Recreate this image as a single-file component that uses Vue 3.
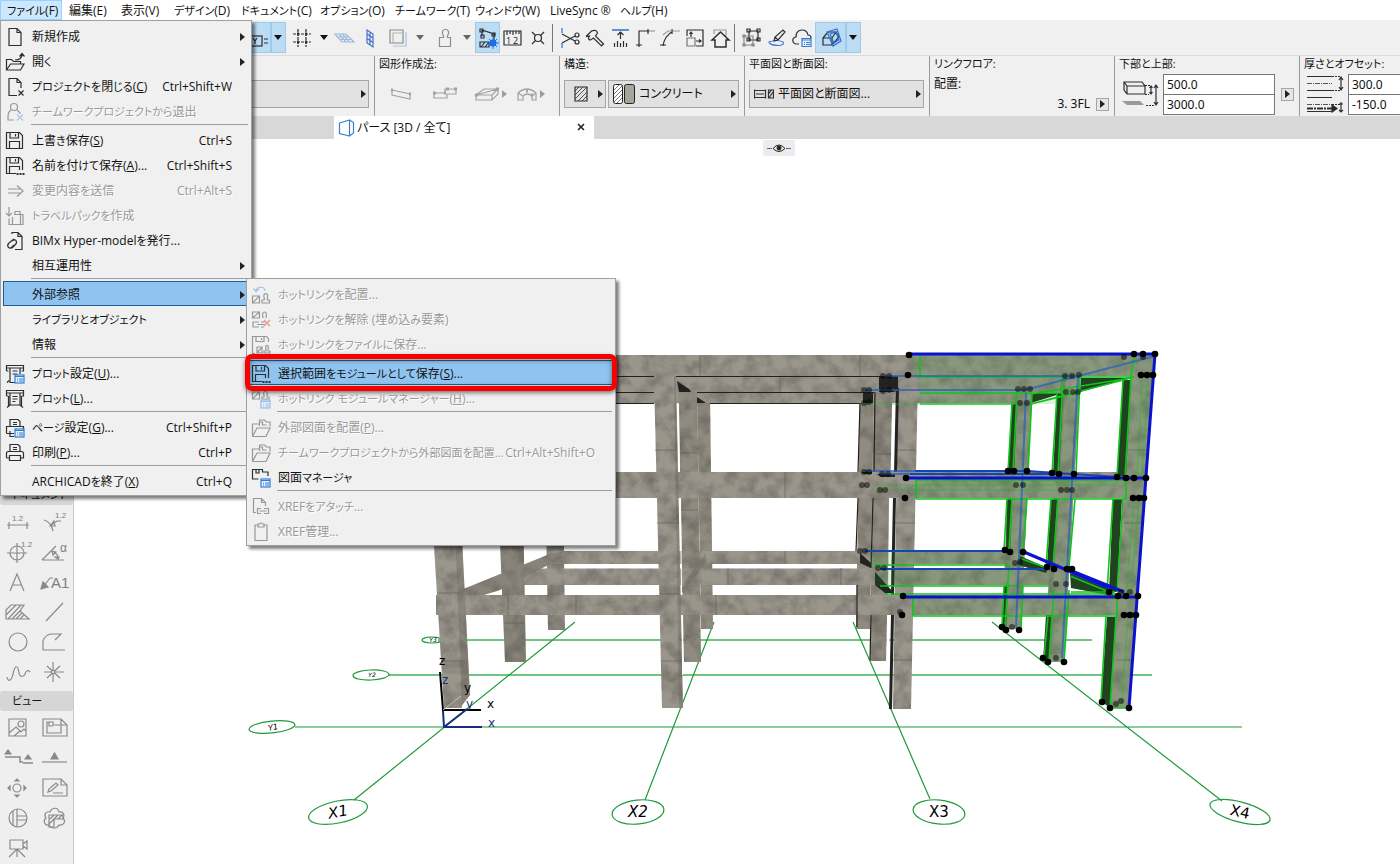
<script setup>
import { ref } from 'vue'

const menuBar = ['ファイル(F)', '編集(E)', '表示(V)', 'デザイン(D)', 'ドキュメント(C)', 'オプション(O)', 'チームワーク(T)', 'ウィンドウ(W)', 'LiveSync ®', 'ヘルプ(H)']

// Kana runs land on the odd indexes, everything else on the even ones.
const runs = (text) => text.split(/([ぁ-んァ-ヶー]+)/)

const fileMenu = [
  [
    { icon: 'doc', text: '新規作成', sub: true },
    { icon: 'open', text: '開く', sub: true },
    { icon: 'docClose', text: 'プロジェクトを閉じる', key: 'C', short: 'Ctrl+Shift+W' },
    { icon: 'leave', text: 'チームワークプロジェクトから退出', off: true },
  ],
  [
    { icon: 'save', text: '上書き保存', key: 'S', short: 'Ctrl+S' },
    { icon: 'saveAs', text: '名前を付けて保存', key: 'A', dots: true, short: 'Ctrl+Shift+S' },
    { icon: 'send', text: '変更内容を送信', short: 'Ctrl+Alt+S', off: true },
    { icon: 'travel', text: 'トラベルパックを作成', off: true },
    { icon: 'bimx', text: 'BIMx Hyper-modelを発行', dots: true },
    { text: '相互運用性', sub: true },
  ],
  [
    { text: '外部参照', sub: true, active: true },
    { text: 'ライブラリとオブジェクト', sub: true },
    { text: '情報', sub: true },
  ],
  [
    { icon: 'plotSet', text: 'プロット設定', key: 'U', dots: true },
    { icon: 'plot', text: 'プロット', key: 'L', dots: true },
  ],
  [
    { icon: 'pageSet', text: 'ページ設定', key: 'G', dots: true, short: 'Ctrl+Shift+P' },
    { icon: 'print', text: '印刷', key: 'P', dots: true, short: 'Ctrl+P' },
  ],
  [{ text: 'ARCHICADを終了', key: 'X', short: 'Ctrl+Q' }],
]

const subMenu = [
  [
    { icon: 'hotPlace', text: 'ホットリンクを配置', dots: true, off: true },
    { icon: 'hotBreak', text: 'ホットリンクを解除 (埋め込み要素)', off: true },
    { icon: 'hotSave', text: 'ホットリンクをファイルに保存', dots: true, off: true },
  ],
  [
    { icon: 'saveAs', text: '選択範囲をモジュールとして保存', key: 'S', dots: true, active: true },
    { icon: 'hotManage', text: 'ホットリンク モジュールマネージャー', key: 'H', dots: true, off: true },
  ],
  [
    { icon: 'extDraw', text: '外部図面を配置', key: 'P', dots: true, off: true },
    { icon: 'extDraw', text: 'チームワークプロジェクトから外部図面を配置', dots: true, short: 'Ctrl+Alt+Shift+O', off: true, tight: true },
    { icon: 'drawManage', text: '図面マネージャ' },
  ],
  [
    { icon: 'xref', text: 'XREFをアタッチ', dots: true, off: true },
    { icon: 'clip', text: 'XREF管理', dots: true, off: true },
  ],
]

const listBadge = '<g stroke="#2f7fd6"><rect x="10" y="11" width="9" height="8" fill="#eaf3fd"/><path d="M10 12.5h9M12 15h1M14 15h4M12 17h1M14 17h4"/></g>'

const icons = {
  doc: '<path d="M4 1.5h8l4 4v13H4zM12 1.5v4h4"/>',
  open: '<path d="M1.5 18V7.5h5l2 2h7V12M1.500 18l4-6h13.5l-3.5 6zM10 8c5 0 7-2 7-6M14.5 4.500l2.5-3 2.5 3"/>',
  docClose: '<path d="M12 18.5H4v-17h8l4 4V11M12 1.5v4h4M13.5 13.5l5 5M18.5 13.5l-5 5"/>',
  leave: '<circle cx="9" cy="5" r="3.5"/><path d="M6 8c-3 2-3 4-3 10h6M12 8q3 2 3 4"/><path d="M12 12.5l6 6M18 12.5l-6 6" stroke="#5f94e8"/>',
  save: '<path d="M1.5 1.5h13l3 3v13h-16zM5 1.5V7h8.500V1.5M10.5 3v2.5M4.5 17.5v-7h10v7"/>',
  saveAs: '<path d="M11 17.5H1.5v-16h13l3 3V14M5 1.5V7h8.500V1.5M10.5 3v2.5M4.5 17.5v-7h10V14"/><path d="M11.5 18h2M14.5 18h2M17.5 18h2" stroke-width="2"/>',
  send: '<path d="M3 8h12M3 12h12M12 4.500l6 5.500-6 5.500"/>',
  travel: '<path d="M4 1v9M1 7l3 3 3-3M4 12.500v6h14v-10H9M10 8.500v-3h5v3M7.500 11v7M15.500 9v9"/>',
  bimx: '<path d="M7 3V1.500h6l4 4v13h-7M13 1.500v4h4"/><path d="M9 8l-5 4c-3 3 0 7 3 4l2-2M7 10c4-3 6 1 3 4l-2 2c-2 2-5 1-5-1"/>',
  plotSet: '<path d="M1.500 7V1.500h17V7h-2M3.500 7h-2M5 4v14.500h5M15 4v6M1.500 4h17M2 18.500l2-2M7.500 7h5M7.500 10h5"/>' + listBadge,
  plot: '<path d="M1.500 7V1.500h17V7h-2M3.500 7h-2M5 4v12h10V4M1.500 4h17M2 18.500l3-2.500M18 18.500l-3-2.500M3.500 7v11M16.500 7v11M7.500 7.500h5M7.500 10h5M7.500 12.500h3"/>',
  pageSet: '<path d="M5 8V1.500h8l2 2V8M1.500 15.500V8.500h17v3M1.500 15.500H9M5 13v5.500h4M8 4.500h4M8 6.500h4"/>' + listBadge,
  print: '<path d="M5 8.500v-7h8l2 2v5M1.500 15v-4.500q0-2 2-2h13q2 0 2 2V15h-3M1.500 15h3M4.500 12.500h11v5h-11zM8 4.500h4M8 6.500h4"/>',
  hotPlace: '<path d="M1.500 11h7v7h-7zM1.500 18l7-7M11 18h7.500v-3h-2c-1-2 1-3 0-5.500q-1.700-2-3.400 0c-1 2.500 1 3.500 0 5.500H11z"/><path d="M14 6c0-5-8-5-9 0M2.500 3.500l2.500 3 3-2.500" stroke="#3d82dd"/>',
  hotBreak: '<path d="M1.500 2h7v6h-7zM1.500 8l7-6M12 8c0-2-1-3 0-5q1.500-2 3 0c1 2 0 3 0 5M8 12H2v5h6M6 14.500h8M10 12h4M10 17h3"/><path d="M13 10l6 6M19 10l-6 6" stroke="#e23b28" stroke-width="1.500"/>',
  hotSave: '<path d="M4 18.500H1.500v-17h14l2 2V7M5 1.500v5h8v-5M10.500 3v2M6 12h5v6H6zM6 18l5-6M13 18h6v-2h-2c-.3-2 1-3 0-5q-1-1-2 0c-1 2 .3 3 0 5h-2z"/>',
  hotManage: '<path d="M1.500 3h7v7h-7zM1.500 10l7-7M11 10h7V8h-2c-.5-2 1-3 0-5q-1.500-2-3 0c-1 2 .5 3 0 5h-2z"/>' + listBadge,
  extDraw: '<path d="M8 6H1.500v12.500L6 10h13l-4 8.500H1.500M8.500 8V2h5l2 2H19v4.500M8.500 4h3v3h4"/>',
  drawManage: '<path d="M7 11H1.500V1.500h10V4H17v4M5 1.500V5h3V1.500M1.500 11h6"/>' + listBadge,
  xref: '<path d="M5 15.500H2.500v-14h8l4 4V9M10.500 1.500v4h4M10 11.500H6.500v5H10M8.500 14h7M13 11.500h4.500v5H13"/>',
  clip: '<path d="M7 3H4v15.500h12V3h-3M7 2h1.500q1.500-2 3 0H13v3H7z"/>',
}

const caret = 'M0 0h8l-4 5z'
const tools = [
  { id: 'xy', label: '座標', cls: 'on first', art: '<path d="M9 3v3l3 1" /><rect x="4" y="10" width="20" height="10"/><path d="M26 13h4M26 17h4M8 12l4 5M12 12l-4 5M15 12l2 3 2-3M17 15v3"/>' },
  { id: 'xyMenu', label: '座標メニュー', cls: 'on drop', drop: true },
  { id: 'grid', label: 'グリッド', cls: 'gap3', art: '<path d="M8 3v18M16 3v18M3 8h18M3 16h18" stroke-dasharray="3 1"/><path d="M7 8h2M15 8h2M7 16h2M15 16h2" stroke-width="3"/>' },
  { id: 'gridMenu', label: 'グリッドメニュー', cls: 'drop gap3', drop: true },
  { id: 'plane', label: '編集平面', art: '<g stroke="#9db9dd"><path d="M2 8h11l8 8H9zM5 11h11M7 13.500h11M6 8l7 8M9.500 8l7 8"/></g>' },
  { id: 'planeV', label: '垂直平面', art: '<g stroke="#3f74cf"><path d="M9 4l6 4v13l-6-4zM12 6v13M9 8l6 4M9 12.500l6 4"/></g>' },
  { id: 'trace', label: 'トレース', cls: 'gap3', off: true, art: '<path d="M4 4h13v13H4z"/><path d="M7 7h10v10H7z" stroke="#b3b3b3"/><path d="M20 6v14H7" stroke="#9fc3ea"/>' },
  { id: 'traceMenu', label: 'トレースメニュー', cls: 'drop gap3', drop: true, off: true },
  { id: 'stamp', label: '重力', cls: 'gap4', off: true, art: '<path d="M6.500 20.500v-9h4c1-2-2-3-1-6 1-3 5-3 6 0 1 3-2 4-1 6h3v9z"/>' },
  { id: 'stampMenu', label: '重力メニュー', cls: 'drop gap3', drop: true, off: true },
  { id: 'snap', label: 'ガイドとスナップ', cls: 'on', art: '<path d="M6 10V4M6 4l12 4v6M4 3h3v3H4zM16 7h3v3h-3zM5 9h3v3H5zM4 16h9v5H4zM5 21l4-5M9 21l4-5"/><circle cx="17" cy="17" r="3.500" fill="#1769e0" stroke="none"/><path d="M17 11v12M11 17h12M13 13l8 8M21 13l-8 8" stroke="#1c74ec" stroke-width="1"/>' },
  { id: 'ruler', label: '測定', art: '<path d="M3 5h17v14H3zM6 5v4M9 5v3M12 5v4M15 5v3M18 5v3"/><text x="5" y="18" font-size="9" stroke="none" fill="#222">1</text><text x="12" y="18" font-size="9" stroke="none" fill="#222">2</text>' },
  { id: 'cross', label: '交差', art: '<circle cx="12" cy="12" r="3.500"/><path d="M6 6l3.500 3.500M18 6l-3.500 3.500M6 18l3.500-3.500M18 18l-3.500-3.500"/>' },
  { id: 'sep1', sep: true },
  { id: 'trim', label: 'トリム', art: '<path d="M4 2v5M4 17v5" stroke="#2f6fc5"/><path d="M4 8l13 7M4 17l13-7"/><circle cx="19" cy="9" r="2"/><circle cx="19" cy="16" r="2"/>' },
  { id: 'hammer', label: '調整', art: '<path d="M3.500 10l5-5q5-2 6 2l-2 3 8 8-2 2-8-8-3 2q-2 0-2-2l1-2-3 .5z"/>' },
  { id: 'raise', label: '高さ', art: '<path d="M4 4h17" stroke="#2f6fc5" stroke-width="1.500"/><path d="M12.500 13V6M9.500 9l3-3 3 3M6.500 17v4M9.500 15v6M12.500 17v4M15.500 15v6M18.500 17v4"/>' },
  { id: 'corner', label: 'コーナー', art: '<path d="M6 21V5h10M3 19h6M15 3v5"/><path d="M16 5h6" stroke="#999"/>' },
  { id: 'fillet', label: 'フィレット', art: '<path d="M5 20C6 12 10 8 15 5M2 19h6M14 3v5"/><path d="M5 9l5-4h12" stroke="#999"/>' },
  { id: 'resize', label: 'サイズ変更', art: '<path d="M4 10V4h16v16h-7M8 11V6M6.500 8L8 6l1.500 2M13 15h5M16 13.500l2 1.500-2 1.500"/><path d="M4 12h8v8H4z" stroke="#777"/>' },
  { id: 'home', label: 'ホーム', art: '<path d="M6 8V4h12v6" stroke="#999"/><path d="M4 14l8.500-8 8.500 8h-3v7H7v-7z" stroke-width="1.500"/>' },
  { id: 'sep2', sep: true },
  { id: 'group', label: 'グループ', art: '<path d="M9 5h9v9H9zM7 3h3v3H7zM17 3h3v3h-3zM17 12h3v3h-3zM7 12h3v3H7z"/><path d="M4 10h9v9H4zM3 9h2v2H3zM3 18h2v2H3zM12 18h2v2h-2z" stroke="#888"/>' },
  { id: 'pen', label: '変更', art: '<path d="M4 16q8-3 14 0 2 3-4 3.500-9 0-10-3.500z" stroke="#3d77d8"/><path d="M9 15l1-4 8-7 2 2-7 8zM10 11l3 3"/>' },
  { id: 'cloud', label: 'BIMcloud', art: '<path d="M9 18H6q-4-1-3-5 1-2 3-2 0-7 6-7 5 0 6 5 3 0 3 3"/><g stroke="#2f7fd6"><path d="M12 12.500h9v8h-9zM12 14h9M14 16.500h1M16 16.500h4M14 18.500h1M16 18.500h4"/></g>' },
  { id: 'view3d', label: '3D表示', cls: 'on wide gap1', art: '<path d="M4 12l5-6M4 12h9v7H4zM13 12l4-6 3 5-7 8M9 6h8"/><path d="M8 6l10-3 4 12-8 5zM11 8l6-2 3 8-5 3z" stroke="#3071cf"/>' },
  { id: 'view3dMenu', label: '3D表示メニュー', cls: 'on drop', drop: true },
]

const toolbox = [
  {
    title: 'ドキュメント',
    items: [
      ['寸法', '<path d="M3 16h22M5 13v7M23 13v7"/><text x="8" y="12" font-size="8">1.2</text>'],
      ['半径寸法', '<path d="M4 11q7 2 9 11M21 12h-4l-7 5M10 17l4-5 1 5z"/><text x="15" y="9" font-size="8">1.2</text>'],
      ['高度寸法', '<circle cx="13" cy="14" r="7"/><path d="M3 14h20M13 4v20"/><text x="17" y="8" font-size="8">1.2</text>'],
      ['角度寸法', '<path d="M2 21h22M2 21L16 7"/><path d="M12 12q7 3 6 9M12 12l1 4 3-3zM18 20l-3-2h4z"/><text x="20" y="13" font-size="12">α</text>'],
      ['テキスト', '<path d="M6 22l7-17 7 17M8 16h10"/>'],
      ['ラベル', '<path d="M13 9h-3l-7 9"/><path d="M1 20l2-7 5 5z" fill="#888"/><text x="11" y="19" font-size="15">A1</text>'],
      ['塗りつぶし', '<path d="M2 20v-9l5-5h13l-4 6 9 8zM4 20L17 6M8 20L17 11M12 20l6-6M16 20l4-4M2 16L12 6"/>'],
      ['線', '<path d="M6 22L23 4"/>'],
      ['円', '<circle cx="14" cy="13" r="9"/>'],
      ['ポリライン', '<path d="M3 21v-9q2-6 8-7h10l-6 6M3 21h22"/>'],
      ['スプライン', '<path d="M3 18c1 6 5 3 6-3 2-10 5-9 6-1 1 5 5 4 6 1 1-4 3-4 5-2"/>'],
      ['ホットスポット', '<path d="M13 3v20M4 13h20M7 7l13 12M20 7L7 19"/><rect x="11.500" y="11.500" width="3" height="3" fill="#efefef"/>'],
    ],
  },
  {
    title: 'ビュー',
    items: [
      ['図', '<path d="M5 4h17v17H5zM5 18l7-6 5 5 3-3 2 2M10 21l6-5"/><circle cx="17" cy="9" r="3"/>'],
      ['図面', '<path d="M3 4h18l6 6v11H3zM21 4v6h6M7 7h6v3h8v8H7zM9 7v4h4"/>'],
      ['断面図', '<path d="M1 12h15v5h3M19 18h10" stroke-width="1.500"/><path d="M1 9l3-4 3 4zM21 14l3-4 3 4z" fill="#888"/>'],
      ['立面図', '<path d="M2 17h25"/><path d="M11 14l3.500-6 3.500 6z" fill="#888"/>'],
      ['展開図', '<circle cx="13" cy="13" r="4"/><path d="M11 6l2-2 2 2zM11 20l2 2 2-2zM6 11l-2 2 2 2zM20 11l2 2-2 2z" fill="#888"/>'],
      ['ワークシート', '<path d="M3 4h18l6 6v11H3zM21 4v6h6M8 17l1-3 7-6 2 2-7 6zM13 18h10"/>'],
      ['詳細図', '<circle cx="14" cy="13" r="9"/><path d="M9 6v15M13 4v18M13 11h10M13 15h10"/>'],
      ['変更', '<path d="M9 20c-5 1-6-5-3-7-3-4 1-7 4-6 2-5 8-5 9 0 5-1 6 4 4 6 3 3 1 8-4 7-2 4-8 4-10 0z"/><path d="M9 10h14v4h-9v8H9zM10 14l4-4M14 14l4-4M18 14l4-4M9 19l5-5"/>'],
      ['カメラ', '<path d="M6 5h13v9H6zM19 9l4-3v8l-4-3M13 14v8M13 14l-8 8M13 14l8 8"/>'],
    ],
  },
]

const solidDots = [
  [909, 355], [1134, 354], [1143, 354], [1155, 354], [908, 375], [1141, 375], [1147, 375], [1153, 375],
  [1008, 471], [1014, 471], [1027, 471], [1052, 473], [1059, 474], [1074, 474], [906, 478], [905, 498],
  [1117, 477], [1126, 478], [1134, 478], [1146, 478], [1133, 498], [1139, 498], [1144, 498],
  [1005, 550], [1010, 552], [1023, 552], [1047, 567], [1054, 569], [1067, 569], [1072, 569],
  [1109, 592], [903, 596], [902, 615], [1118, 596], [1126, 596], [1138, 596], [1124, 615], [1130, 615], [1136, 615],
  [1002, 627], [1006, 630], [1019, 630], [1043, 658], [1048, 662], [1064, 662], [1102, 702], [1110, 708], [1129, 708],
]
const ghostDots = [
  [883, 376], [889, 376], [883, 391], [889, 390], [864, 390], [869, 390], [864, 403], [869, 402],
  [864, 472], [869, 472], [862, 485], [867, 485], [882, 474], [888, 474], [880, 490], [885, 490],
  [860, 551], [865, 551], [878, 568], [884, 568], [900, 612],
  [1018, 389], [1024, 389], [1030, 389], [1020, 403], [1027, 403], [1065, 376], [1072, 376], [1079, 375], [1066, 392], [1073, 392], [1078, 392],
  [1016, 485], [1023, 485], [1061, 490], [1067, 490], [1072, 490], [1124, 357], [1143, 357],
  [1015, 563], [1020, 562], [1056, 584], [1066, 584], [1121, 592], [1130, 592], [1012, 627], [1056, 658], [1116, 704], [1121, 701],
]

const lower = ref('500.0')
const upper = ref('3000.0')
const thick = ref('300.0')
const offset = ref('-150.0')
</script>

<template>
  <div class="app">
    <nav class="menubar">
      <button v-for="(m, i) in menuBar" :key="m" type="button" :class="{ open: i === 0 }"><span v-for="(r, ri) in runs(m)" :key="ri" :class="{ kana: ri % 2 }">{{ r }}</span></button>
    </nav>

    <div class="toolbar">
      <template v-for="t in tools" :key="t.id">
        <span v-if="t.sep" class="sep"></span>
        <button v-else type="button" class="tool" :class="[t.cls, { dim: t.off }]" :aria-label="t.label">
          <svg v-if="t.drop" width="9" height="6" viewBox="0 0 9 6"><path :d="caret" fill="currentColor" /></svg>
          <svg v-else class="line" :width="t.id === 'xy' ? 32 : 24" height="24" :viewBox="t.id === 'xy' ? '0 0 32 24' : '0 0 24 24'" v-html="t.art"></svg>
        </button>
      </template>
    </div>

    <div class="infobar">
      <section class="cell lead">
        <button type="button" class="combo" aria-label="レイヤー"><span class="tri"></span></button>
      </section>
      <section class="cell">
        <h2>図形作成法:</h2>
        <div class="methods">
          <button type="button" aria-label="単一"><svg class="line" width="24" height="18" viewBox="0 0 24 18"><path d="M3 5l18 4v5L3 10z" /><path d="M2 5h2M20 9h2" stroke-width="3" /></svg></button>
          <button type="button" aria-label="連続"><svg class="line" width="26" height="18" viewBox="0 0 26 18"><path d="M2 8h11V4h11v5h-9v4H2z" /><path d="M1 8h3M12 8h2M14 4h3M22 4h3" stroke-width="3" /></svg></button>
          <button type="button" aria-label="矩形"><svg class="line" width="26" height="18" viewBox="0 0 26 18"><path d="M2 10l8-6h14l-6 6zM2 10v5h16l6-6V4M18 10v5M2 10l22-6" /><path d="M1 10h3M22 4h3" stroke-width="3" /></svg></button>
          <span class="tri"></span>
          <button type="button" aria-label="円弧"><svg class="line" width="22" height="18" viewBox="0 0 22 18"><path d="M2 15V8q9-8 18 0v7h-4v-4q-5-4-9 0v4zM2 8l5 3M20 8l-4 3" /><path d="M10 6h2M15 10h2" stroke-width="3" /></svg></button>
          <span class="tri"></span>
        </div>
      </section>
      <section class="cell">
        <h2>構造:</h2>
        <div class="row">
          <button type="button" class="combo short" aria-label="構造の種類">
            <svg class="line" width="14" height="16" viewBox="0 0 14 16"><path d="M1 1h12v14H1z" /><path d="M1 5l4-4M1 9l8-8M1 13l12-12M4 15l9-9M8 15l5-5" stroke-width=".8" /></svg>
            <span class="tri"></span>
          </button>
          <button type="button" class="combo fill">
            <svg width="22" height="20" viewBox="0 0 22 20" stroke="#222"><rect x=".5" y=".5" width="9" height="19" rx="2" fill="#fff" /><path d="M1 6l5-5M1 10l8-8M1 14l8-8M1 18l8-8M4 19l5-5" stroke="#777" /><rect x="11.500" y=".5" width="10" height="19" rx="2" fill="#a5a699" /></svg>
            <span class="kana">コンクリート</span><span class="tri"></span>
          </button>
        </div>
      </section>
      <section class="cell">
        <h2>平面図と断面図:</h2>
        <div class="row">
          <button type="button" class="combo fill">
            <svg class="line" width="20" height="10" viewBox="0 0 20 10"><path d="M.5.5v9M.5 1.500h11v7H.5M11.500.5v9M2 5h8" /><path d="M14.500 1h5v8h-5zM14.500 5l3-4M15 9l4-6" /></svg>
            <span>平面図と断面図...</span><span class="tri"></span>
          </button>
        </div>
      </section>
      <section class="cell link">
        <h2>リンクフロア:</h2>
        <p>配置:</p>
        <div class="floor">3. 3FL <button type="button" class="mini" aria-label="フロアを選択"><span class="tri"></span></button></div>
      </section>
      <section class="cell">
        <h2>下部と上部:</h2>
        <div class="pair">
          <svg class="line" width="38" height="28" viewBox="0 0 38 28"><path d="M3 2h18l3 4v8H6l-3-4zM3 2l3 4h18M6 6v8" /><path d="M1 21h18l4 4H6z" fill="#9a9a9a" stroke="none" /><path d="M30 6v8M28.500 8l1.500-2 1.500 2M28.500 12l1.500 2 1.500-2M35 5v20M33 8l2-3 2 3M33 22l2 3 2-3" /><path d="M24 5.500h6M24 14.500h4M25 25.500h9" stroke-dasharray="2 1" /></svg>
          <div class="fields">
            <input v-model="lower" aria-label="下部" />
            <input v-model="upper" aria-label="上部" />
          </div>
          <button type="button" class="mini" aria-label="詳細"><span class="tri"></span></button>
        </div>
      </section>
      <section class="cell last">
        <h2>厚さとオフセット:</h2>
        <div class="pair">
          <svg class="line" width="38" height="38" viewBox="0 0 38 38"><path d="M1 1.500h25M1 15.500h25M1 22.500h25M1 36.500h26" /><path d="M1 8.500h25M1 29.500h25" stroke-dasharray="5 1 1 1" stroke-width=".8" /><path d="M26 1.500h8M26 15.500h8M26 29.500h8" stroke-dasharray="2 1" /><path d="M35 2v13M33 5l2-3 2 3M33 12l2 3 2-3M35 27v10M33 29h4M33 35l2 2 2-2" /><path d="M1 33.500h26" stroke-width="2" stroke-dasharray="6 1 2 1" /><path d="M26 30l5 3.500-5 3.500z" fill="#222" /></svg>
          <div class="fields">
            <input v-model="thick" aria-label="厚さ" />
            <input v-model="offset" aria-label="オフセット" />
          </div>
        </div>
      </section>
    </div>

    <div class="tabs">
      <div class="tab">
        <svg width="17" height="18" viewBox="0 0 17 18" fill="none" stroke="#3c7bdc" stroke-width="1.200"><path d="M1.500 4l10-3v16l-10-2.500zM11.500 1l4 2.500V14l-4 3" /></svg>
        <span>パース [3D / 全て]</span>
        <button type="button" aria-label="タブを閉じる"><svg width="9" height="9" viewBox="0 0 9 9"><path d="M1 1l6 6M7 1L1 7" stroke="#222" stroke-width="1.600" /></svg></button>
      </div>
    </div>

    <div class="work">
      <aside class="toolbox">
        <template v-for="g in toolbox" :key="g.title">
          <h3>{{ g.title }}</h3>
          <div class="grid">
            <button v-for="it in g.items" :key="it[0]" type="button" :aria-label="it[0]">
              <svg width="30" height="26" viewBox="0 0 30 26" v-html="it[1]"></svg>
            </button>
          </div>
        </template>
      </aside>

      <main class="viewport">
        <svg class="scene" viewBox="74 139 1326 725" preserveAspectRatio="xMinYMin meet">
          <defs>
            <filter id="concrete" x="0" y="0" width="100%" height="100%" color-interpolation-filters="sRGB">
              <feTurbulence type="fractalNoise" baseFrequency="0.07" numOctaves="4" seed="7" />
              <feColorMatrix values="0 0 0 0 .25  0 0 0 0 .24  0 0 0 0 .22  .8 0 0 0 -.3" />
              <feComposite in2="SourceAlpha" operator="in" result="stain" />
              <feMerge><feMergeNode in="SourceGraphic" /><feMergeNode in="stain" /></feMerge>
            </filter>
          </defs>

          <g class="axis">
            <path class="far" d="M438 640H1092M389 675H1152" />
            <path d="M295 727H1242M575 622L354 800M714 622L645 800M853 622L930 799M992 622L1222 801" />
            <ellipse cx="338" cy="812" rx="30" ry="11" transform="rotate(-12 338 812)" />
            <ellipse cx="638" cy="812" rx="26" ry="12" transform="rotate(-6 638 812)" />
            <ellipse cx="939" cy="812" rx="26" ry="12" transform="rotate(6 939 812)" />
            <ellipse cx="1240" cy="812" rx="31" ry="10" transform="rotate(15 1240 812)" />
            <ellipse cx="272" cy="727" rx="23" ry="6" transform="rotate(-6 272 727)" />
            <ellipse cx="371" cy="675" rx="18" ry="5" transform="rotate(-2 371 675)" />
            <ellipse cx="432" cy="640" rx="10" ry="3" />
          </g>
          <g class="tags">
            <text class="slant" x="338" y="817" transform="rotate(-10 338 812)">X1</text>
            <text class="slant" x="638" y="817">X2</text>
            <text x="939" y="817">X3</text>
            <text x="1240" y="817" transform="rotate(12 1240 812)">X4</text>
            <text class="slant small" x="273" y="730" transform="rotate(-12 273 727)">Y1</text>
            <text class="slant tiny" x="372" y="677">Y2</text>
            <text class="slant tiny" x="433" y="642">Y3</text>
          </g>

          <g filter="url(#concrete)" fill="#9a968c">
            <path fill="#8f8b80" d="M860 392h14l-4 237h-14zM697 392h13l3 237h-12zM544 400h18l3 230h-17z" />
            <path d="M400 392H1016V403H400zM548 551H1012V564H548z" />
            <path fill="#8f8b80" d="M874 376h19l-7 285h-16zM678 376h19l4 286h-17zM1012 392h20l-11 237h-19z" />
            <path d="M400 376H1066V392.500H400zM512 568.500H1052V585H512z" />
            <path fill="#89847a" d="M494 400h27l5 262h-21zM461 590l91-37 10-1v6l-62 32-16 5h-22zM682 586l24-33v10l-24 30zM1061 376h19l-16 286h-20z" />
            <path d="M400 355H1155L1153 376H400zM400 472H1146L1144 498H400zM436 595H1138L1136 615H436z" />
            <path fill="#89847a" d="M670 376h6l7 332h-6zM450 400h5l15 295-10 13z" />
            <path d="M654 376h20l5 332H662zM425 400h25l12 308H444zM898 376h20L911 709H893zM1131 370L1154 355 1129 708H1110zM1066 376h14l-16 286h-15zM1017 392h15l-11 237h-14z" />
          </g>
          <g class="joints">
            <path d="M700 355v21M860 355v21M780 376v16M785 472v26M716 595v20M855 595v20M785 551v13M728 568v17M841 568v17M655 450h21M657 523h22M660 594h20M661 661h21M679 453h18M681 510h17M896 450h20M895 523h20M892 660h20M874 454h18M437 593h22M441 661h24M504 623h21M508 595v20M576 595v20M1128 450h21M1124 523h20M1116 660h18" />
          </g>
          <path d="M892 403h4l-2 69h-3zM889 498h4l-2 97h-3zM887 615h3l-1 40h-2z" fill="#fff" />
          <path d="M678 404h1l1 68h-2zM680 498h1l1 92h-1zM682 615h1v60h-1z" fill="#fff" />
          <g class="dark">
            <path d="M677 381l12 8 2 3h-12zM697 397l9 6h-9zM879 377h19v13l-4 2h-15zM863 393h10v10h-10z" />
            <path d="M877 474h18v3h-14zM861 472h11v2h-8zM860 553l11 10v5l-11-5zM875 572l19 21h-9l-10-8z" />
            <path d="M896 388h3l-2 84h-3zM893 498h3l-2 97h-3zM891 615h3l-2 94h-3z" />
            <path class="edge" d="M615 376.500H654M676 376.500H898M615 392.500H654M697 392.500H874M615 403.500H654M710 403.500H860M860 403l-2 69M875 392l-1 80M858 498l-2 53M873 498l-2 70M857 585v42M871 615l-1 45" />
          </g>

          <path class="tint" d="M911 355H1155L1129 708H1110L1117 616H912V597H1118L1126 499H916V480H1127L1131 378H911zM918 376H1066V404H918zM870 552H1010V565H870zM875 570H1050V586H875zM1012 404h20l-11 225h-19zM1059 394h20l-15 268h-20z" />
          <g class="deep">
            <path d="M1012 404h5l-3 68h-6zM1057 394h6l-4 80h-6zM1123 380h8l-5 96h-9zM1007 499h5l-2 52h-4zM1051 499h6l-4 68h-6zM1113 499h9l-5 93h-8zM1004 586h4l-2 43h-4zM1046 615h5l-2 46h-6zM1107 617h9l-6 91-9-7z" />
            <path d="M1081 378h50l-51 14zM1031 393h32l-32 10zM1020 556l28 12-2 5-28-8zM1070 573l43 18v5l-42-8z" />
          </g>
          <g class="green">
            <path d="M920 356v20M918 377H1134M920 393H1063M920 404H1015M1134 357l-3 20M1031 394l100-16-100 26M1080 392l-49 12M916 480v19M916 480H1126M916 499H1126M1126 480v19" />
            <path class="faint" d="M860 404h60M875 485h240M875 490h185M1142 376l-5 100M1148 376l-6 100M1134 499l-8 96M1139 499l-8 96M1128 616l-6 86" />
            <path d="M1012 404l-4 68M1017 393l-4 79M1032 394l-4 78M1057 394l-5 80M1063 378l-5 96M1080 378l-4 96M1123 380l-6 96M1131 378l-6 100M1007 499l-3 52M1012 499l-3 52M1027 499l-4 52M1051 499l-5 68M1058 499l-5 68M1075 499l-6 68M1113 499l-6 93M1123 499l-6 93" />
            <path d="M874 565h134M880 586h170M885 594h235M913 616H1117M913 597v19M1117 597v19M1022 559l28 10M1070 576l44 18M1071 592h44M1004 586l-2 41M1009 565l-4 62M1023 586l-2 43M1048 616l-4 42M1054 590l-5 71M1069 590l-5 72M1106 616l-5 85M1116 616l-6 92M1110 708h19" />
          </g>
          <g class="blue">
            <path class="ghost" d="M885 376H1080M865 390H1025L1155 356M1026 393L1016 627M1078 376L1062 658M865 471H1025M880 474H1075" />
            <path class="mid" d="M865 551H1010M880 569H1050M910 474H1060M915 471H1025M1027 471L1118 477" />
            <path d="M909 354H1155L1129 708M906 478H1146M903 597H1138M1024 552L1109 588M1067 569L1124 592" />
          </g>
          <circle v-for="(d, i) in ghostDots" :key="'g' + i" class="ghostDot" :cx="d[0]" :cy="d[1]" r="3" />
          <circle v-for="(d, i) in solidDots" :key="'s' + i" :cx="d[0]" :cy="d[1]" r="3.300" />

          <g fill="none" stroke-width="2">
            <path d="M440 672l3 38h38" stroke="#000" />
            <path d="M443 710l18-14" stroke="#bbb" stroke-width="1" />
            <path d="M443 711l1 16h38M444 727l18-14" stroke="#182f7d" />
            <path d="M462 713l5-4" stroke="#182f7d" />
          </g>
          <g class="letters">
            <text x="439" y="665">z</text><text x="464" y="692">y</text><text x="487" y="708">x</text>
            <g class="navy"><text x="442" y="684">z</text><text x="466" y="708">y</text><text x="488" y="727">x</text></g>
          </g>
        </svg>
        <button type="button" class="eye" aria-label="表示切替">
          <svg width="26" height="12" viewBox="0 0 26 12" fill="none" stroke="#222"><path d="M1 6.500h5M20 6.500h5" stroke="#3b6fb5" /><path d="M7 6.500q6-7 12 0-6 6-12 0z" /><circle cx="13" cy="6" r="2" fill="#222" /></svg>
        </button>
      </main>
    </div>

    <div class="menu file">
      <ul v-for="(group, gi) in fileMenu" :key="gi">
        <li v-for="m in group" :key="m.text">
          <button type="button" :class="{ active: m.active }" :disabled="m.off">
            <svg v-if="m.icon" class="ico" width="20" height="20" viewBox="0 0 20 20" v-html="icons[m.icon]"></svg>
            <span v-else class="ico"></span>
            <span class="text"><span v-for="(r, ri) in runs(m.text)" :key="ri" :class="{ kana: ri % 2 }">{{ r }}</span><template v-if="m.key">(<u>{{ m.key }}</u>)</template><template v-if="m.dots">...</template></span>
            <span v-if="m.short" class="short">{{ m.short }}</span>
            <span v-if="m.sub" class="tri"></span>
          </button>
        </li>
      </ul>
    </div>

    <div class="menu sub">
      <ul v-for="(group, gi) in subMenu" :key="gi">
        <li v-for="m in group" :key="m.text">
          <button type="button" :class="{ active: m.active, marked: m.active }" :disabled="m.off">
            <svg class="ico" width="20" height="20" viewBox="0 0 20 20" v-html="icons[m.icon]"></svg>
            <span class="text" :class="{ tight: m.tight }"><span v-for="(r, ri) in runs(m.text)" :key="ri" :class="{ kana: ri % 2 }">{{ r }}</span><template v-if="m.key">(<u>{{ m.key }}</u>)</template><template v-if="m.dots">...</template></span>
            <span v-if="m.short" class="short">{{ m.short }}</span>
          </button>
        </li>
      </ul>
    </div>
  </div>
</template>

<style>
body { margin: 0; overflow: hidden; }
</style>

<style scoped>
.app {
  position: relative;
  display: flex;
  flex-direction: column;
  height: 100vh;
  overflow: hidden;
  background: #fff;
  color: #111;
  font: 12px/16px "Open Sans", "Noto Sans CJK JP", sans-serif;
  font-feature-settings: "palt";
}
button { margin: 0; padding: 0; border: 0; background: none; color: inherit; font: inherit; font-feature-settings: inherit; }
h2, h3, p, ul { margin: 0; padding: 0; font-weight: normal; list-style: none; }
svg { display: block; }
.line { fill: none; stroke: #2b2f33; stroke-width: 1.2; }
.kana, .tight { font-size: 11px; }
.tri { flex: none; width: 0; height: 0; border: 4px solid transparent; border-left: 5px solid #222; border-right: 0; }

.menubar {
  display: grid;
  grid-template-columns: 62px 52px 53px 67px 79px 75px 80px 75px 70px 62px;
  height: 20px;
}
.menubar button { padding: 2px 7px 0; text-align: left; white-space: nowrap; line-height: 18px; }
.menubar .open { background: #cce8ff; box-shadow: inset 0 0 0 1px #99d1ff; }

.toolbar {
  display: flex;
  align-items: center;
  height: 35px;
  padding-left: 236px;
  background: #f0f0f0;
  border-bottom: 1px solid #dcdcdc;
}
.tool { flex: none; display: flex; align-items: center; justify-content: center; width: 25px; height: 31px; }
.tool.first { width: 35px; }
.tool.drop { width: 15px; }
.tool.wide { width: 31px; }
.tool.on { background: #bcdcf4; box-shadow: inset 0 0 0 1px #9ccbee; }
.gap1 { margin-left: 1px; }
.gap3 { margin-left: 3px; }
.gap4 { margin-left: 4px; }
.dim { color: #666; }
.dim .line { stroke: #8c8c8c; }
.sep { flex: none; width: 1px; height: 28px; margin: 0 4px 0 2px; background: #777; }

.infobar { display: flex; height: 60px; background: #f0f0f0; overflow: hidden; }
.cell {
  flex: none;
  display: flex;
  flex-direction: column;
  box-sizing: border-box;
  width: 185px;
  padding: 0 5px 0 4px;
  border-left: 1px solid #9a9a9a;
}
.cell.lead { width: 374px; border: 0; padding: 24px 5px 0; }
.cell.last { flex: 1; min-width: 185px; }
h2 { font-size: 11px; line-height: 16px; white-space: nowrap; }
.row { display: flex; gap: 2px; margin-top: 8px; }
.combo {
  display: flex;
  align-items: center;
  gap: 4px;
  box-sizing: border-box;
  height: 28px;
  padding: 0 2px 0 4px;
  border: 1px solid #a5a5a5;
  background: #e1e1e1;
  white-space: nowrap;
}
.combo .tri { margin-left: auto; }
.combo.short { width: 42px; padding-left: 9px; }
.combo.fill { flex: 1; }
.combo .kana { font-size: 12px; }
.methods { display: flex; align-items: center; gap: 9px; height: 28px; margin: 8px 0 0 10px; opacity: .4; }
.methods button:nth-of-type(2) { margin-left: 10px; }
.methods button:nth-of-type(3) { margin-left: 7px; }
.methods .tri { margin-left: -7px; }
.link p { line-height: 24px; }
.floor { display: flex; justify-content: flex-end; align-items: center; gap: 6px; height: 16px; font-family: "Noto Sans", sans-serif; }
.mini {
  display: flex;
  align-items: center;
  justify-content: center;
  box-sizing: border-box;
  width: 13px;
  height: 13px;
  border: 1px solid #a5a5a5;
  background: #e6e6e6;
}
.pair { display: flex; align-items: center; gap: 4px; padding-left: 2px; margin-top: 2px; }
.fields { width: 112px; }
.fields input {
  display: block;
  box-sizing: border-box;
  width: 100%;
  height: 21px;
  margin-bottom: -1px;
  padding: 0 3px;
  border: 1px solid #777;
  background: #fff;
  color: #111;
  font: 12px/18px "Noto Sans", sans-serif;
}
.pair .mini { margin-left: 2px; }

.tabs { display: flex; height: 23px; padding-left: 334px; background: #d8d8d8; }
.tab { display: flex; align-items: center; gap: 2px; box-sizing: border-box; width: 260px; padding: 0 8px 0 4px; background: #fff; }
.tab button { margin-left: auto; }

.work { flex: 1; display: flex; min-height: 0; }
.toolbox {
  flex: none;
  display: flex;
  flex-direction: column;
  justify-content: flex-end;
  box-sizing: border-box;
  width: 74px;
  padding-bottom: 1px;
  background: #efefef;
  border-right: 1px solid #c8c8c8;
  overflow: hidden;
}
.toolbox h3 { height: 20px; margin-top: 4px; padding-left: 12px; border-radius: 3px; background: #d6d6d6; line-height: 20px; font-size: 11px; }
.grid { display: grid; grid-template-columns: 36px 36px; padding: 2px 0 0 1px; }
.grid button { display: flex; align-items: center; justify-content: center; height: 30px; }
.grid svg { fill: none; stroke: #8a8a8a; stroke-width: 1.2; }
.grid :deep(text) { fill: #808080; stroke: none; font-family: "Liberation Sans", sans-serif; }

.viewport { position: relative; flex: 1; min-width: 0; overflow: hidden; background: #fff; }
.scene { width: 100%; height: 100%; }
.axis { fill: none; stroke: #1f9a3c; stroke-width: 1.2; }
.axis .far { stroke: #6fc482; stroke-width: 2; }
.tags { font: 15px "DejaVu Sans", sans-serif; text-anchor: middle; }
.tags .slant { font-style: italic; }
.tags .small { font-size: 8px; }
.tags .tiny { font-size: 6px; }
.joints { fill: none; stroke: #5f5c54; opacity: .6; }
.dark { fill: #222321; }
.dark .edge { fill: none; stroke: #20211f; stroke-width: 1.2; }
.tint { fill: #2fa02f; opacity: .16; }
.deep { fill: #21421f; }
.green { fill: none; stroke: #10c41c; stroke-width: 1.6; }
.green .faint { opacity: .35; }
.blue { fill: none; stroke: #0a12d0; stroke-width: 3; }
.blue .ghost { stroke: #2a62b8; stroke-width: 2; opacity: .75; }
.blue .mid { stroke: #1446b4; stroke-width: 2; }
.ghostDot { opacity: .5; }
.letters { font: 12px "DejaVu Sans", sans-serif; }
.navy { fill: #182f7d; }
.eye {
  position: absolute;
  top: 1px;
  left: 689px;
  display: flex;
  align-items: center;
  justify-content: center;
  width: 32px;
  height: 16px;
  border-radius: 2px;
  background: #ececec;
}

.menu {
  position: absolute;
  box-sizing: border-box;
  padding: 2px;
  border: 1px solid #a0a0a0;
  background: #f0f0f0;
  box-shadow: 3px 3px 3px rgba(0, 0, 0, .5);
}
.menu.file { top: 20px; left: 0; width: 252px; }
.menu.sub { top: 278px; left: 246px; width: 370px; }
.menu ul + ul::before { content: ""; display: block; height: 1px; margin: 1px 1px 2px 28px; background: #9c9c9c; }
.menu li button {
  position: relative;
  display: flex;
  align-items: center;
  box-sizing: border-box;
  width: 100%;
  height: 25px;
  padding: 2px 4px 0 2px;
  text-align: left;
  white-space: nowrap;
}
.menu .ico { flex: none; width: 20px; height: 20px; margin-right: 7px; fill: none; stroke: #2b2f33; stroke-width: 1.2; }
.menu .short { margin-left: auto; padding-right: 13px; }
.sub .short { padding-right: 14px; }
.menu .tri { margin-left: auto; }
.menu button:disabled { color: #999; text-shadow: 1px 1px 0 #fff; }
.menu button:disabled .ico { opacity: .45; }
.menu button.active { background: #90c4f0; box-shadow: inset 0 0 0 1px #1d5f9c; }
.sub .ico { margin-right: 7px; }
.marked::after {
  content: "";
  position: absolute;
  inset: -6px -4px;
  border: 5px solid #f80000;
  border-radius: 7px;
  box-shadow: 0 2px 4px rgba(0, 0, 0, .5), inset 0 1px 5px rgba(0, 0, 0, .5);
}
</style>
